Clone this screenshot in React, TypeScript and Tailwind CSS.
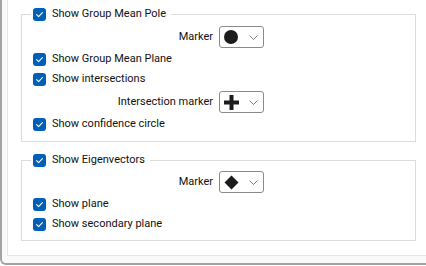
import React from 'react';

type Shape = 'circle' | 'plus' | 'diamond';

function Check({ label }: { label: string }) {
  return (
    <div className="flex h-[20px] items-center gap-[6px] pl-[11px]">
      <Box />
      <span>{label}</span>
    </div>
  );
}

function Box() {
  return (
    <span className="flex h-[13px] w-[13px] shrink-0 items-center justify-center rounded-[3px] bg-[#005fb8]">
      <svg width="13" height="13" viewBox="0 0 13 13" fill="none">
        <path d="M3.6 6.7 L5.6 8.6 L9.4 4.6" stroke="#ffffff" strokeWidth="1.1" strokeLinecap="round" strokeLinejoin="round" />
      </svg>
    </span>
  );
}

function Glyph({ shape }: { shape: Shape }) {
  if (shape === 'circle') {
    return <span className="h-[14px] w-[14px] rounded-full bg-[#1c1c1c]" />;
  }
  if (shape === 'plus') {
    return (
      <svg width="15" height="15" viewBox="0 0 15 15">
        <rect x="0" y="5.5" width="15" height="4" fill="#1c1c1c" />
        <rect x="5.5" y="0" width="4" height="15" fill="#1c1c1c" />
      </svg>
    );
  }
  return (
    <svg width="15" height="15" viewBox="0 0 15 15">
      <path d="M7.5 0.5 L14.5 7.5 L7.5 14.5 L0.5 7.5 Z" fill="#1c1c1c" />
    </svg>
  );
}

function MarkerRow({ label, shape }: { label: string; shape: Shape }) {
  return (
    <div className="flex h-[22px] items-center">
      <span className="w-[191px] text-right">{label}</span>
      <div className="ml-[6px] flex h-[22px] w-[45px] items-center justify-between rounded-[3px] border border-[#8a8a8a] bg-white pl-[4px] pr-[5px]">
        <Glyph shape={shape} />
        <svg width="9" height="5" viewBox="0 0 9 5" fill="none">
          <path d="M0.5 0.5 L4.5 4.5 L8.5 0.5" stroke="#707070" strokeWidth="0.9" />
        </svg>
      </div>
    </div>
  );
}

function Group({ title, children, className }: { title: string; children: React.ReactNode; className: string }) {
  return (
    <fieldset className={`ml-[13px] mr-[10px] border border-[#dcdcdc] ${className}`}>
      <legend className="ml-[9px] flex h-[16px] items-center gap-[6px] pl-[2px] pr-[5px]">
        <Box />
        <span>{title}</span>
      </legend>
      {children}
    </fieldset>
  );
}

export default function App() {
  return (
    <div
      className="h-[266px] w-[426px] overflow-hidden bg-white text-[11px] text-[#111111]"
      style={{ fontFamily: 'Roboto, "Liberation Sans", sans-serif' }}
    >
      <div className="flex h-[265px] flex-col rounded-bl-[6px] border-b-2 border-l-2 border-[#a3a3a3] bg-[#f9f9f9] pb-[7px] pl-[5px]">
        <div className="flex-1 border-b border-l border-[#e6e6e6] bg-white">
          <Group title="Show Group Mean Pole" className="mt-[6px] pb-[7px] pt-[4px]">
            <MarkerRow label="Marker" shape="circle" />
            <div className="pt-[1px]">
              <Check label="Show Group Mean Plane" />
              <Check label="Show intersections" />
            </div>
            <div className="pt-[2px]">
              <MarkerRow label="Intersection marker" shape="plus" />
            </div>
            <div className="pt-[1px]">
              <Check label="Show confidence circle" />
            </div>
          </Group>
          <Group title="Show Eigenvectors" className="mt-[10px] pb-[6px] pt-[3px]">
            <MarkerRow label="Marker" shape="diamond" />
            <div className="pt-[1px]">
              <Check label="Show plane" />
              <Check label="Show secondary plane" />
            </div>
          </Group>
        </div>
      </div>
    </div>
  );
}
